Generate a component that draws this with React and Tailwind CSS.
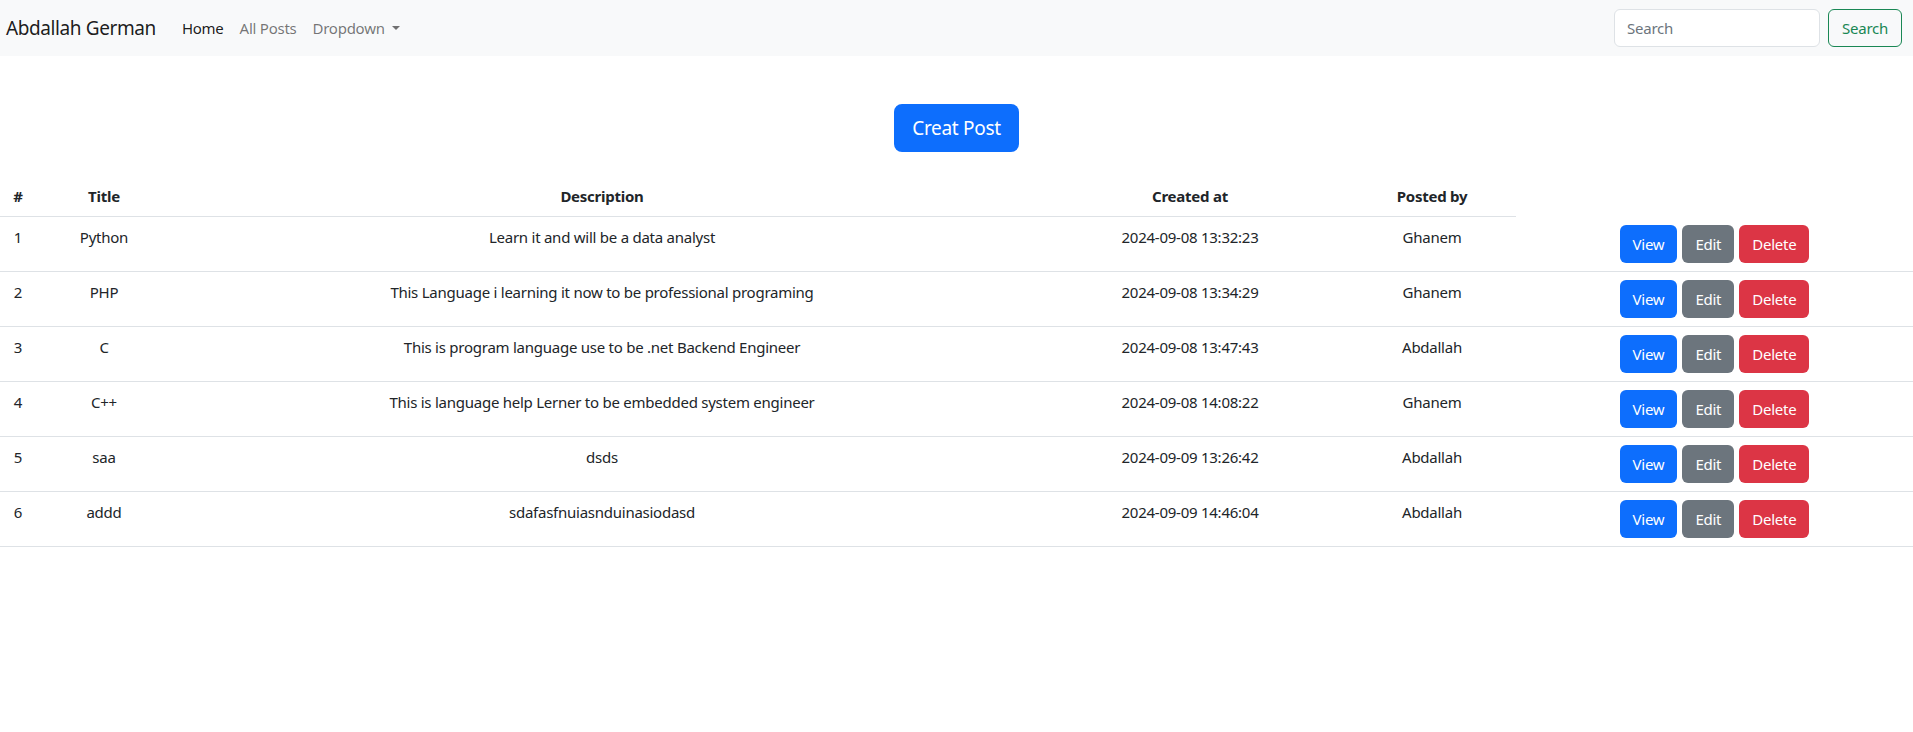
import React from "react";

const rows = [
  { id: 1, title: "Python", desc: "Learn it and will be a data analyst", created: "2024-09-08 13:32:23", by: "Ghanem" },
  { id: 2, title: "PHP", desc: "This Language i learning it now to be professional programing", created: "2024-09-08 13:34:29", by: "Ghanem" },
  { id: 3, title: "C", desc: "This is program language use to be .net Backend Engineer", created: "2024-09-08 13:47:43", by: "Abdallah" },
  { id: 4, title: "C++", desc: "This is language help Lerner to be embedded system engineer", created: "2024-09-08 14:08:22", by: "Ghanem" },
  { id: 5, title: "saa", desc: "dsds", created: "2024-09-09 13:26:42", by: "Abdallah" },
  { id: 6, title: "addd", desc: "sdafasfnuiasnduinasiodasd", created: "2024-09-09 14:46:04", by: "Abdallah" },
];

export default function App() {
  return (
    <div className="min-h-screen bg-white text-[#212529] text-[15px] tracking-[-0.25px] leading-6" style={{ fontFamily: '"Segoe UI", "Noto Sans", sans-serif' }}>
      <nav className="h-[56px] bg-[#f8f9fa] flex items-center justify-between pl-[6px] pr-[11px]">
        <div className="flex items-center">
          <span className="text-[19px] tracking-[-0.4px] leading-[30px] text-black/90 mr-[26px]">Abdallah German</span>
          <div className="flex items-center gap-[16px]">
            <span className="text-black/90">Home</span>
            <span className="text-black/55">All Posts</span>
            <span className="text-black/55 flex items-center">
              Dropdown
              <span className="ml-[7px] inline-block w-0 h-0 border-l-[4px] border-r-[4px] border-t-[4.5px] border-l-transparent border-r-transparent border-t-black/55"></span>
            </span>
          </div>
        </div>
        <div className="flex items-center gap-[8px]">
          <input
            className="w-[206px] h-[38px] bg-white border border-[#dee2e6] rounded-[6px] px-[12px] text-[15px] tracking-[-0.25px] placeholder:text-[#6c757d] outline-none"
            placeholder="Search"
          />
          <button className="h-[38px] px-[13px] border border-[#198754] text-[#198754] rounded-[6px] bg-transparent">Search</button>
        </div>
      </nav>

      <div className="flex justify-center pt-[48px] pb-[24px]">
        <button className="h-[48px] px-[18px] bg-[#0d6efd] text-white text-[19px] tracking-[-0.3px] rounded-[8px]">Creat Post</button>
      </div>

      <table className="w-full table-fixed border-collapse text-center">
        <colgroup>
          <col className="w-[36px]" />
          <col className="w-[136px]" />
          <col className="w-[860px]" />
          <col className="w-[316px]" />
          <col className="w-[168px]" />
          <col className="w-[397px]" />
        </colgroup>
        <thead>
          <tr>
            {["#", "Title", "Description", "Created at", "Posted by"].map((h) => (
              <th key={h} className="font-bold p-[8px] border-b border-[#dee2e6] align-top">{h}</th>
            ))}
          </tr>
        </thead>
        <tbody>
          {rows.map((r) => (
            <tr key={r.id} className="border-b border-[#dee2e6]">
              <td className="p-[8px] align-top">{r.id}</td>
              <td className="p-[8px] align-top">{r.title}</td>
              <td className="p-[8px] align-top">{r.desc}</td>
              <td className="p-[8px] align-top">{r.created}</td>
              <td className="p-[8px] align-top">{r.by}</td>
              <td className="p-[8px] align-top">
                <div className="flex justify-center gap-[5px]">
                  <button className="h-[38px] px-[13px] rounded-[6px] bg-[#0d6efd] text-white">View</button>
                  <button className="h-[38px] px-[13px] rounded-[6px] bg-[#6c757d] text-white">Edit</button>
                  <button className="h-[38px] px-[13px] rounded-[6px] bg-[#dc3545] text-white">Delete</button>
                </div>
              </td>
            </tr>
          ))}
        </tbody>
      </table>
    </div>
  );
}
